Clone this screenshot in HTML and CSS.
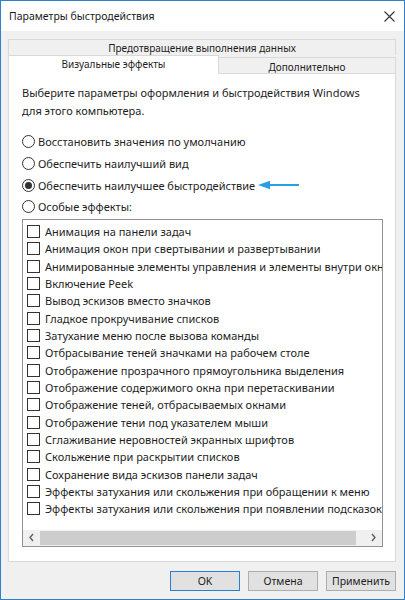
FILE: index.html
```html
<!DOCTYPE html>
<html lang="ru">
<head>
<meta charset="utf-8">
<title>Параметры быстродействия</title>
<link rel="stylesheet" href="styles.css">
</head>
<body>
<div class="window">
  <div class="titlebar">
    <span class="title">Параметры быстродействия</span>
    <svg class="close" width="11" height="11" viewBox="0 0 11 11"><path d="M0.5 0.5 L10.5 10.5 M10.5 0.5 L0.5 10.5" stroke="#333" stroke-width="1.1" fill="none"/></svg>
  </div>
  <div class="body">
    <div class="tabs">
      <div class="tab-row1">Предотвращение выполнения данных</div>
      <div class="tab-row2">
        <div class="tab selected">Визуальные эффекты</div>
        <div class="tab other">Дополнительно</div>
      </div>
    </div>
    <div class="panel">
      <p class="intro">Выберите параметры оформления и быстродействия Windows для этого компьютера.</p>
      <div class="radios">
        <div class="radio-row"><span class="radio"></span><span>Восстановить значения по умолчанию</span></div>
        <div class="radio-row"><span class="radio"></span><span>Обеспечить наилучший вид</span></div>
        <div class="radio-row"><span class="radio checked"></span><span>Обеспечить наилучшее быстродействие</span>
          <svg class="arrow" width="41" height="10" viewBox="0 0 41 10"><path d="M0 5 L12 0.8 L12 4 L41 4 L41 6 L12 6 L12 9.2 Z" fill="#2a9ee2"/></svg>
        </div>
        <div class="radio-row"><span class="radio"></span><span>Особые эффекты:</span></div>
      </div>
      <div class="listbox">
        <div class="items">
          <div class="item"><span class="check"></span><span>Анимация на панели задач</span></div>
          <div class="item"><span class="check"></span><span>Анимация окон при свертывании и развертывании</span></div>
          <div class="item"><span class="check"></span><span>Анимированные элементы управления и элементы внутри окна</span></div>
          <div class="item"><span class="check"></span><span>Включение Peek</span></div>
          <div class="item"><span class="check"></span><span>Вывод эскизов вместо значков</span></div>
          <div class="item"><span class="check"></span><span>Гладкое прокручивание списков</span></div>
          <div class="item"><span class="check"></span><span>Затухание меню после вызова команды</span></div>
          <div class="item"><span class="check"></span><span>Отбрасывание теней значками на рабочем столе</span></div>
          <div class="item"><span class="check"></span><span>Отображение прозрачного прямоугольника выделения</span></div>
          <div class="item"><span class="check"></span><span>Отображение содержимого окна при перетаскивании</span></div>
          <div class="item"><span class="check"></span><span>Отображение теней, отбрасываемых окнами</span></div>
          <div class="item"><span class="check"></span><span>Отображение тени под указателем мыши</span></div>
          <div class="item"><span class="check"></span><span>Сглаживание неровностей экранных шрифтов</span></div>
          <div class="item"><span class="check"></span><span>Скольжение при раскрытии списков</span></div>
          <div class="item"><span class="check"></span><span>Сохранение вида эскизов панели задач</span></div>
          <div class="item"><span class="check"></span><span>Эффекты затухания или скольжения при обращении к меню</span></div>
          <div class="item"><span class="check"></span><span>Эффекты затухания или скольжения при появлении подсказок</span></div>
        </div>
        <div class="hscroll">
          <svg class="sarrow" width="17" height="15" viewBox="0 0 17 15"><path d="M10 4 L7 7.5 L10 11" stroke="#606060" stroke-width="1.4" fill="none"/></svg>
          <div class="thumb-track"><div class="thumb"></div></div>
          <svg class="sarrow" width="17" height="15" viewBox="0 0 17 15"><path d="M7 4 L10 7.5 L7 11" stroke="#606060" stroke-width="1.4" fill="none"/></svg>
        </div>
      </div>
    </div>
    <div class="buttons">
      <div class="btn default">OK</div>
      <div class="btn">Отмена</div>
      <div class="btn">Применить</div>
    </div>
  </div>
</div>
</body>
</html>
```
FILE: styles.css
```css
html, body {
  margin: 0;
  padding: 0;
  background: #f0f0f0;
}
body {
  font-family: "Noto Sans", "Open Sans", sans-serif;
  font-size: 11px;
  color: #1e1e1e;
  overflow: hidden;
}
.window {
  width: 405px;
  height: 600px;
  box-sizing: border-box;
  border: 1px solid #2f80cc;
  background: #f0f0f0;
  display: flex;
  flex-direction: column;
}
.titlebar {
  height: 30px;
  flex: none;
  background: #ffffff;
  display: flex;
  align-items: center;
  justify-content: space-between;
  padding: 0 9px 0 8px;
}
.title {
  font-size: 10.5px;
  color: #1a1a1a;
}
.close {
  display: block;
}
.body {
  flex: 1;
  display: flex;
  flex-direction: column;
  padding: 8px 8px 0 7px;
}
.tabs {
  display: flex;
  flex-direction: column;
  font-size: 10px;
}
.tab-row1 {
  height: 16px;
  box-sizing: border-box;
  border: 1px solid #d9d9d9;
  border-bottom: none;
  background: #f0f0f0;
  text-align: center;
  line-height: 16px;
}
.tab-row2 {
  display: flex;
  height: 18px;
  align-items: flex-start;
}
.tab {
  box-sizing: border-box;
  text-align: center;
}
.tab.selected {
  width: 211px;
  height: 19px;
  background: #ffffff;
  border: 1px solid #d9d9d9;
  border-bottom: none;
  line-height: 17px;
  position: relative;
  z-index: 1;
}
.tab.other {
  flex: 1;
  height: 17px;
  margin-top: 2px;
  background: #f0f0f0;
  border: 1px solid #d9d9d9;
  border-left: none;
  border-bottom: none;
  line-height: 18px;
}
.panel {
  height: 489px;
  box-sizing: border-box;
  border: 1px solid #d9d9d9;
  background: #ffffff;
  padding: 10px 13px 0 13px;
  display: flex;
  flex-direction: column;
}
.intro {
  margin: 0;
  line-height: 18px;
}
.radios {
  margin-top: 11px;
  display: flex;
  flex-direction: column;
}
.radio-row {
  height: 21.7px;
  display: flex;
  align-items: center;
  white-space: nowrap;
}
.radio {
  width: 13px;
  height: 13px;
  box-sizing: border-box;
  border: 1px solid #333333;
  border-radius: 50%;
  margin-right: 3px;
  flex: none;
  display: flex;
  align-items: center;
  justify-content: center;
}
.radio.checked::after {
  content: "";
  width: 7px;
  height: 7px;
  border-radius: 50%;
  background: #333333;
}
.arrow {
  margin-left: 3px;
  flex: none;
}
.listbox {
  margin-top: 1px;
  width: 361px;
  height: 328px;
  box-sizing: border-box;
  border: 1px solid #8f9399;
  display: flex;
  flex-direction: column;
}
.items {
  flex: 1;
  overflow: hidden;
  padding: 3px 0 0 4px;
}
.item {
  height: 17.33px;
  display: flex;
  align-items: center;
  white-space: nowrap;
}
.check {
  width: 13px;
  height: 13px;
  box-sizing: border-box;
  border: 1px solid #333333;
  margin-right: 5px;
  flex: none;
}
.hscroll {
  height: 16px;
  flex: none;
  background: #f0f0f0;
  display: flex;
  align-items: center;
}
.sarrow {
  flex: none;
  display: block;
}
.thumb-track {
  flex: 1;
  height: 14px;
  display: flex;
  padding-right: 9px;
}
.thumb {
  flex: 1;
  background: #cdcdcd;
}
.buttons {
  margin-top: 9px;
  display: flex;
  justify-content: flex-end;
  gap: 8px;
}
.btn {
  width: 70px;
  height: 20px;
  box-sizing: border-box;
  border: 1px solid #adadad;
  background: #e1e1e1;
  text-align: center;
  line-height: 18px;
  font-size: 10.5px;
}
.btn.default {
  border-color: #2a7fd0;
}
```
